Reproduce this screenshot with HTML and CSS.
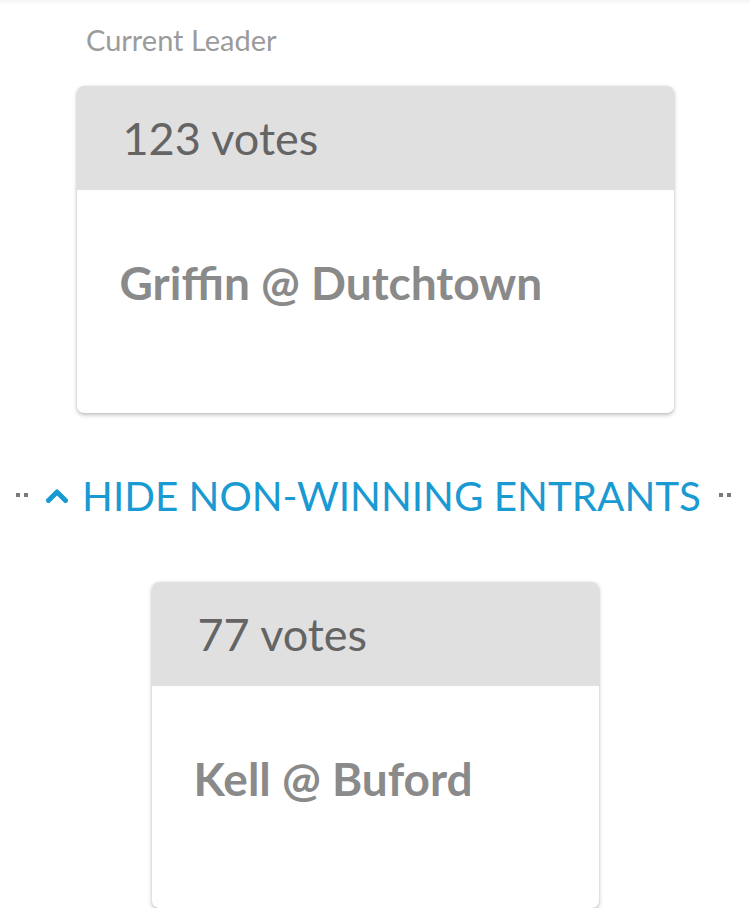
FILE: index.html
```html
<!DOCTYPE html>
<html lang="en">
<head>
    <meta charset="UTF-8">
    <meta name="viewport" content="width=device-width, initial-scale=1.0">
    <title>Current Leader</title>
    <link rel="stylesheet" href="styles.css">
</head>
<body>

    <div class="topbar"></div>

    <div class="label">Current Leader</div>

    <div class="entry leader">
        <div class="entry-votes">123 votes</div>
        <div class="entry-name">Griffin @ Dutchtown</div>
    </div>

    <div class="toggle">
        <span class="dots"><i></i><i></i></span>
        <button class="toggle-btn">
            <svg class="chevron" width="22" height="15" viewBox="0 0 22 15">
                <path d="M2.5 12.5 L11 4 L19.5 12.5" fill="none" stroke="#1a9ad2" stroke-width="5" stroke-linecap="round" stroke-linejoin="round"/>
            </svg>
            HIDE NON-WINNING ENTRANTS
        </button>
        <span class="dots"><i></i><i></i></span>
    </div>

    <div class="entry other">
        <div class="entry-votes">77 votes</div>
        <div class="entry-name">Kell @ Buford</div>
    </div>

</body>
</html>
```

FILE: styles.css
```css
body {
    font-family: 'Lato', 'Open Sans', sans-serif;
    background: #fff;
    margin: 0;
    padding: 0;
}
.topbar {
    height: 2px;
    background: #f6f6f6;
    box-shadow: 0 1px 3px rgba(0,0,0,0.04);
}
.label {
    margin: 20px 0 0 86px;
    font-size: 29px;
    color: #9b9b9b;
    line-height: 36px;
}
.entry {
    margin: 28px auto 0;
    background: #fff;
    border-radius: 7px;
    overflow: hidden;
    box-shadow: 0 2px 4px rgba(0,0,0,0.25), 0 0 2px rgba(0,0,0,0.08);
}
.leader {
    width: 597px;
}
.other {
    width: 447px;
    margin-top: 57px;
}
.entry-votes {
    background: #e0e0e0;
    height: 104px;
    line-height: 104px;
    padding-left: 46px;
    font-size: 45px;
    color: #646464;
}
.entry-name {
    height: 223px;
    padding: 68px 0 0 43px;
    box-sizing: border-box;
    font-size: 46px;
    font-weight: 700;
    color: #8a8a8a;
    line-height: 50px;
}
.other .entry-name {
    height: 222px;
    padding-left: 42px;
}
.toggle {
    display: flex;
    align-items: center;
    justify-content: space-between;
    margin-top: 52px;
    padding: 0 19px 0 16px;
    height: 60px;
}
.dots {
    display: flex;
    gap: 4px;
}
.dots i {
    width: 4px;
    height: 4px;
    background: #7a7a7a;
}
.toggle-btn {
    display: flex;
    align-items: center;
    gap: 14px;
    background: none;
    border: none;
    padding: 0;
    font-family: inherit;
    font-size: 40.4px;
    color: #1a9ad2;
    cursor: pointer;
}
```
